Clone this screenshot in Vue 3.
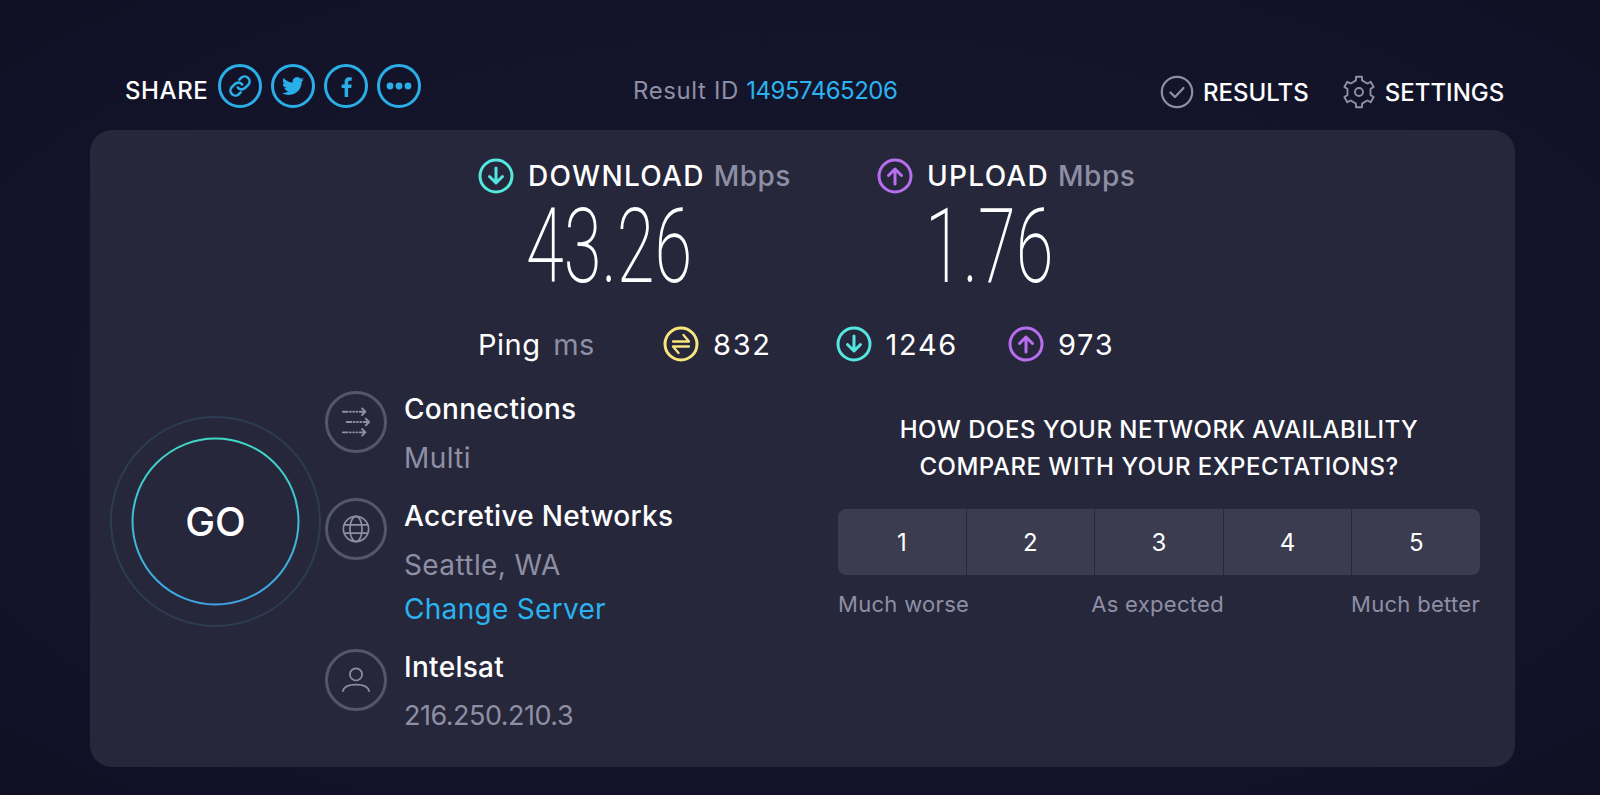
<template>
  <div class="page">
    <!-- top bar -->
    <header class="top">
      <div class="share">
        <span class="share-label">SHARE</span>
        <a class="share-btn">
          <svg viewBox="0 0 24 24" width="26" height="26" fill="none" stroke="currentColor" stroke-width="2.4" stroke-linecap="round">
            <path d="M10 13.5a4.5 4.5 0 0 0 6.6.4l3-3a4.6 4.6 0 0 0-6.5-6.5l-1.7 1.7" />
            <path d="M14 10.5a4.5 4.5 0 0 0-6.6-.4l-3 3a4.6 4.6 0 0 0 6.5 6.5l1.7-1.7" />
          </svg>
        </a>
        <a class="share-btn">
          <svg viewBox="0 0 24 24" width="22" height="22" fill="currentColor">
            <path d="M23.953 4.57a10 10 0 01-2.825.775 4.958 4.958 0 002.163-2.723c-.951.555-2.005.959-3.127 1.184a4.92 4.92 0 00-8.384 4.482C7.69 8.095 4.067 6.13 1.64 3.162a4.822 4.822 0 00-.666 2.475c0 1.71.87 3.213 2.188 4.096a4.904 4.904 0 01-2.228-.616v.06a4.923 4.923 0 003.946 4.827 4.996 4.996 0 01-2.212.085 4.936 4.936 0 004.604 3.417 9.867 9.867 0 01-6.102 2.105c-.39 0-.779-.023-1.17-.067a13.995 13.995 0 007.557 2.209c9.053 0 13.998-7.496 13.998-13.985 0-.21 0-.42-.015-.63A9.935 9.935 0 0024 4.59z" />
          </svg>
        </a>
        <a class="share-btn">
          <svg viewBox="0 0 24 24" width="25" height="25" fill="currentColor">
            <path d="M13.6 22v-8.6h2.9l.5-3.4h-3.4V8c0-1 .3-1.6 1.7-1.6H17V3.3c-.4 0-1.4-.1-2.5-.1-2.5 0-4.3 1.5-4.3 4.4V10H7.4v3.4h2.8V22z" />
          </svg>
        </a>
        <a class="share-btn">
          <svg viewBox="0 0 30 30" width="30" height="30" fill="currentColor">
            <circle cx="6" cy="15" r="3.4" />
            <circle cx="15" cy="15" r="3.4" />
            <circle cx="24" cy="15" r="3.4" />
          </svg>
        </a>
      </div>
      <div class="result-id">Result ID <span class="blue">14957465206</span></div>
      <nav class="nav">
        <a class="nav-item">
          <svg viewBox="0 0 34 34" width="34" height="34" fill="none" stroke="#8e8fa5" stroke-width="2.2" stroke-linecap="round" stroke-linejoin="round">
            <circle cx="17" cy="17" r="15.2" />
            <path d="M10.5 17.5l4.5 4.5 8.5-9" />
          </svg>
          RESULTS
        </a>
        <a class="nav-item">
          <svg viewBox="0 0 34 34" width="34" height="34" fill="none" stroke="#8e8fa5" stroke-width="1.9" stroke-linejoin="round">
            <path :d="gearPath" />
            <circle cx="17" cy="17" r="4" />
          </svg>
          SETTINGS
        </a>
      </nav>
    </header>

    <main class="card">
      <!-- speed results -->
      <section class="speeds">
        <div v-for="s in speeds" :key="s.label" class="speed">
          <div class="speed-head">
            <svg :class="s.cls" viewBox="0 0 36 36" width="36" height="36" fill="none" stroke="currentColor" stroke-width="3" stroke-linecap="round" stroke-linejoin="round">
              <circle cx="18" cy="18" r="16" />
              <path v-if="s.dir === 'down'" d="M18 10v15M11.5 18.5l6.5 6.5 6.5-6.5" />
              <path v-else d="M18 26V11M11.5 17.5l6.5-6.5 6.5 6.5" />
            </svg>
            <span class="speed-label">{{ s.label }}</span>
            <span class="unit">Mbps</span>
          </div>
          <div class="speed-value">{{ s.value }}</div>
        </div>
      </section>

      <!-- ping row -->
      <section class="ping">
        <div class="ping-name">Ping <span class="unit">ms</span></div>
        <div class="ping-item">
          <svg class="yellow" viewBox="0 0 36 36" width="36" height="36" fill="none" stroke="currentColor" stroke-width="3" stroke-linecap="round" stroke-linejoin="round">
            <circle cx="18" cy="18" r="16" />
            <path stroke-width="2.3" d="M10 15.500h16l-5.500-6.500M26 20.500H10l5.500 6.500" />
          </svg>
          <span>832</span>
        </div>
        <div class="ping-item">
          <svg class="teal" viewBox="0 0 36 36" width="36" height="36" fill="none" stroke="currentColor" stroke-width="3" stroke-linecap="round" stroke-linejoin="round">
            <circle cx="18" cy="18" r="16" />
            <path d="M18 10v15M11.5 18.5l6.5 6.5 6.5-6.5" />
          </svg>
          <span>1246</span>
        </div>
        <div class="ping-item">
          <svg class="purple" viewBox="0 0 36 36" width="36" height="36" fill="none" stroke="currentColor" stroke-width="3" stroke-linecap="round" stroke-linejoin="round">
            <circle cx="18" cy="18" r="16" />
            <path d="M18 26V11M11.5 17.5l6.5-6.5 6.5 6.5" />
          </svg>
          <span>973</span>
        </div>
      </section>

      <section class="bottom">
        <!-- go button -->
        <div class="go-wrap">
          <svg class="go-ring" viewBox="0 0 211 211" width="211" height="211" fill="none">
            <defs>
              <linearGradient id="goGrad" x1="0" y1="0" x2="0" y2="1">
                <stop offset="0" stop-color="#3fd8c6" />
                <stop offset="1" stop-color="#3ea3e2" />
              </linearGradient>
            </defs>
            <circle cx="105.5" cy="105.5" r="104.5" stroke="#2c3d52" stroke-width="2" />
            <circle cx="105.5" cy="105.5" r="83" stroke="url(#goGrad)" stroke-width="2" />
          </svg>
          <span class="go-text">GO</span>
        </div>

        <!-- connection details -->
        <div class="details">
          <div class="detail">
            <div class="detail-icon">
              <svg viewBox="0 0 32 32" width="30" height="30" fill="none" stroke="#8e8fa5" stroke-width="2" stroke-linecap="round" stroke-linejoin="round">
                <path d="M2 5h5M9.500 5h1M13 5h1M16.500 5h1M20 5h6M22.500 1.500L26 5l-3.500 3.500" />
                <path d="M6 16h5M13.500 16h1M17 16h1M20.500 16h1M24 16h6M26.500 12.500L30 16l-3.500 3.500" />
                <path d="M2 27h5M9.500 27h1M13 27h1M16.500 27h1M20 27h6M22.500 23.500L26 27l-3.500 3.500" />
              </svg>
            </div>
            <div class="detail-text">
              <div class="detail-title">Connections</div>
              <div class="detail-sub">Multi</div>
            </div>
          </div>
          <div class="detail">
            <div class="detail-icon">
              <svg viewBox="0 0 30 30" width="28" height="28" fill="none" stroke="#8e8fa5" stroke-width="1.8">
                <circle cx="15" cy="15" r="13.500" />
                <ellipse cx="15" cy="15" rx="6.500" ry="13.500" />
                <path d="M2.500 10.500h25M2.500 19.500h25" />
              </svg>
            </div>
            <div class="detail-text">
              <div class="detail-title">Accretive Networks</div>
              <div class="detail-sub">Seattle, WA</div>
              <div class="detail-link">Change Server</div>
            </div>
          </div>
          <div class="detail">
            <div class="detail-icon">
              <svg viewBox="0 0 30 30" width="28" height="28" fill="none" stroke="#8e8fa5" stroke-width="1.8" stroke-linecap="round">
                <circle cx="15" cy="9" r="6.500" />
                <path d="M1 27c1-5 6.500-7 14-7s13 2 14 7" />
              </svg>
            </div>
            <div class="detail-text">
              <div class="detail-title">Intelsat</div>
              <div class="detail-sub ip">216.250.210.3</div>
            </div>
          </div>
        </div>

        <!-- survey -->
        <div class="survey">
          <p class="question">HOW DOES YOUR NETWORK AVAILABILITY<br />COMPARE WITH YOUR EXPECTATIONS?</p>
          <div class="scale">
            <button v-for="n in 5" :key="n" class="scale-btn">{{ n }}</button>
          </div>
          <div class="scale-labels">
            <span>Much worse</span>
            <span class="mid-label">As expected</span>
            <span>Much better</span>
          </div>
        </div>
      </section>
    </main>
  </div>
</template>

<script setup>
const speeds = [
  { label: 'DOWNLOAD', value: '43.26', dir: 'down', cls: 'teal' },
  { label: 'UPLOAD', value: '1.76', dir: 'up', cls: 'purple' }
]

// six-tooth cog outline
function buildGear() {
  const pts = []
  for (let i = 0; i < 6; i++) {
    const a = -90 + i * 60
    const corners = [[a - 30, 11.5], [a - 15, 12], [a - 11, 15.5], [a + 11, 15.5], [a + 15, 12]]
    for (const [deg, r] of corners) {
      const rad = (deg * Math.PI) / 180
      pts.push(`${(17 + r * Math.cos(rad)).toFixed(2)} ${(17 + r * Math.sin(rad)).toFixed(2)}`)
    }
  }
  return 'M' + pts.join('L') + 'Z'
}
const gearPath = buildGear()
</script>

<style>
body {
  background: #12132a;
}
</style>

<style scoped>
.page {
  height: 795px;
  padding: 0 85px 0 90px;
  box-sizing: border-box;
  overflow: hidden;
  background: radial-gradient(ellipse at center, #15162c 0%, #13142a 70%, #0f1024 100%);
  color: #fff;
  font-family: Inter, "Noto Sans", sans-serif;
}

/* top bar */
.top {
  height: 130px;
  padding: 50px 0 0 35px;
  box-sizing: border-box;
  display: grid;
  grid-template-columns: 508px 527px auto;
  align-items: center;
}
.share {
  display: flex;
  align-items: center;
  gap: 9px;
}
.share-label {
  font-size: 24px;
  font-weight: 500;
  letter-spacing: 0.6px;
  margin-right: 1px;
}
.share-btn {
  width: 44px;
  height: 44px;
  margin-bottom: 8px;
  box-sizing: border-box;
  border: 3px solid #2aaee8;
  border-radius: 50%;
  color: #2aaee8;
  display: flex;
  align-items: center;
  justify-content: center;
}
.result-id {
  font-size: 24px;
  letter-spacing: 0.6px;
  color: #8e8fa5;
}
.blue {
  color: #2ab3f0;
  letter-spacing: -0.5px;
}
.nav {
  display: flex;
  gap: 33px;
  padding-top: 4px;
}
.nav-item {
  display: flex;
  align-items: center;
  gap: 9px;
  font-size: 24px;
  font-weight: 500;
}

/* card */
.card {
  height: 637px;
  background: #26273b;
  border-radius: 22px;
  padding-top: 28px;
  box-sizing: border-box;
}
.speeds {
  display: flex;
  padding-left: 388px;
}
.speed {
  width: 399px;
}
.speed-head {
  display: flex;
  align-items: center;
  gap: 14px;
  height: 36px;
  font-size: 28px;
  font-weight: 500;
}
.speed-label {
  color: #fff;
  letter-spacing: 1.3px;
}
.unit {
  color: #8e8fa5;
  margin-left: -5px;
  letter-spacing: 0.5px;
}
.speed-value {
  height: 80px;
  margin: 13px 0 0 48px;
  font-family: Roboto, sans-serif;
  font-weight: 200;
  font-size: 103px;
  line-height: 80px;
  color: #fff;
  transform: scaleX(0.665);
  transform-origin: left center;
}
.teal {
  color: #56e6e0;
}
.purple {
  color: #b76ff0;
}
.yellow {
  color: #f7e57e;
}

/* ping */
.ping {
  display: flex;
  align-items: center;
  height: 36px;
  margin-top: 39px;
  padding-left: 388px;
  font-size: 29px;
}
.ping-name {
  width: 185px;
  flex: none;
  letter-spacing: 0.5px;
}
.ping-name .unit {
  margin-left: 4px;
}
.ping-item {
  display: flex;
  align-items: center;
  gap: 14px;
  width: 172.5px;
  flex: none;
}
.ping-item span {
  color: #fff;
  letter-spacing: 1.7px;
}

/* bottom part */
.bottom {
  display: flex;
  margin-top: 29px;
  padding-left: 20px;
}
.go-wrap {
  position: relative;
  width: 211px;
  height: 211px;
  margin-top: 25px;
  flex: none;
  display: flex;
  align-items: center;
  justify-content: center;
}
.go-ring {
  position: absolute;
  inset: 0;
}
.go-text {
  font-size: 40px;
  font-weight: 500;
}
.details {
  width: 524px;
  margin-left: -7px;
  flex: none;
  display: flex;
  flex-direction: column;
  gap: 22px;
  padding-left: 11px;
  box-sizing: border-box;
}
.detail {
  display: flex;
  gap: 17px;
}
.detail-icon {
  width: 62px;
  height: 62px;
  flex: none;
  box-sizing: border-box;
  border: 3px solid #55566a;
  border-radius: 50%;
  display: flex;
  align-items: center;
  justify-content: center;
}
.detail-title {
  font-size: 28px;
  font-weight: 500;
  letter-spacing: 0.3px;
  line-height: 36px;
}
.detail-sub {
  font-size: 28px;
  letter-spacing: 0.4px;
  line-height: 36px;
  color: #8e8fa5;
  margin-top: 13px;
}
.detail-sub.ip {
  font-size: 27px;
  letter-spacing: -0.5px;
}
.detail-link {
  font-size: 28px;
  letter-spacing: 0.3px;
  line-height: 36px;
  color: #2ab3f0;
  margin-top: 8px;
}

/* survey */
.survey {
  width: 642px;
  flex: none;
  margin-top: 20px;
}
.question {
  margin: 0;
  font-size: 24px;
  font-weight: 500;
  letter-spacing: 0.5px;
  line-height: 37px;
  text-align: center;
}
.scale {
  display: grid;
  grid-template-columns: repeat(5, 1fr);
  gap: 1px;
  height: 66px;
  margin-top: 24px;
  border-radius: 8px;
  overflow: hidden;
}
.scale-btn {
  border: none;
  background: #3b3c50;
  color: #fff;
  font-family: inherit;
  font-size: 24px;
}
.scale-labels {
  display: flex;
  justify-content: space-between;
  margin-top: 14px;
  font-size: 22px;
  letter-spacing: 0.3px;
  line-height: 30px;
  color: #8e8fa5;
}
.mid-label {
  margin-right: 5px;
}
</style>
